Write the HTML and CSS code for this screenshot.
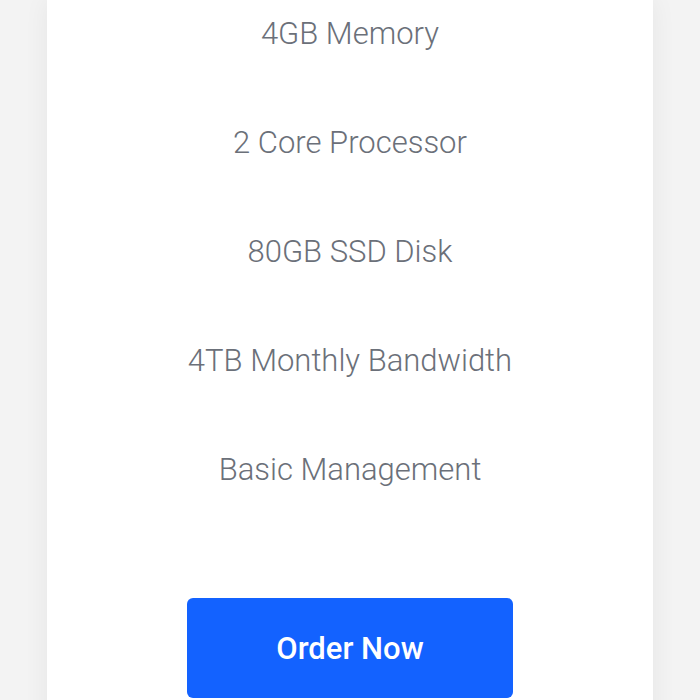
FILE: index.html
```html
<!DOCTYPE html>
<html>
<head>
<meta charset="utf-8">
<link rel="stylesheet" href="styles.css">
</head>
<body>
<div class="page">
  <div class="card">
    <ul class="features">
      <li>4GB Memory</li>
      <li>2 Core Processor</li>
      <li>80GB SSD Disk</li>
      <li>4TB Monthly Bandwidth</li>
      <li>Basic Management</li>
    </ul>
    <button class="order">Order Now</button>
  </div>
</div>
</body>
</html>
```
FILE: styles.css
```css
html, body {
  margin: 0;
  padding: 0;
  background: #f3f3f3;
  font-family: Roboto, "Liberation Sans", sans-serif;
}
.page {
  padding: 0 47px;
  height: 700px;
  overflow: hidden;
}
.card {
  background: #ffffff;
  box-shadow: 0 0 24px rgba(0, 0, 0, 0.06);
  display: flex;
  flex-direction: column;
  align-items: center;
  height: 760px;
}
.features {
  list-style: none;
  margin: 0;
  padding: 0;
  display: flex;
  flex-direction: column;
  align-items: center;
  gap: 75px;
}
.features li {
  font-size: 31px;
  font-weight: 300;
  line-height: 34px;
  color: #6b7079;
  margin: 0;
}
.features li:first-child {
  margin-top: 17px;
}
.order {
  margin-top: 111px;
  width: 326px;
  height: 100px;
  border: none;
  border-radius: 6px;
  background: #1362ff;
  color: #ffffff;
  font-family: Roboto, "Liberation Sans", sans-serif;
  font-size: 31px;
  font-weight: 500;
  padding: 0;
}
```
